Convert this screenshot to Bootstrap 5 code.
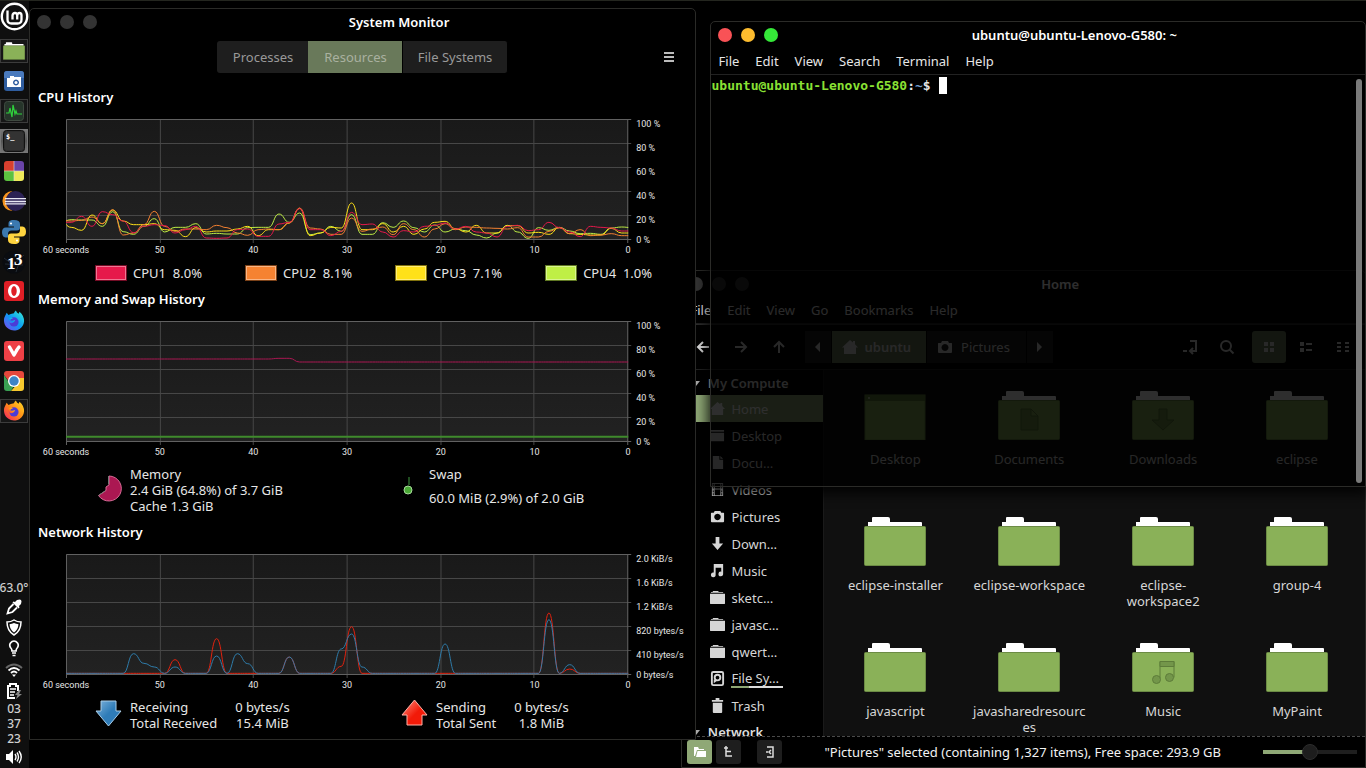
<!DOCTYPE html>
<html lang="en">
<head>
<meta charset="utf-8">
<meta name="viewport" content="width=device-width, initial-scale=1">
<title>Desktop</title>
<link href="https://cdn.jsdelivr.net/npm/bootstrap@5.3.0/dist/css/bootstrap.min.css" rel="stylesheet">
<style>
  :root { --ui: "Noto Sans", "Open Sans", sans-serif; --line: #2b2b28; }
  body { background: #000; color: #e6e6e6; font: 13px/16px var(--ui); height: 100vh; min-height: 768px; overflow: hidden; border-top: 1px solid #24261f; }
  button { font: inherit; color: inherit; background: none; border: 0; padding: 0; }
  a { color: inherit; text-decoration: none; }
  svg { display: block; flex: none; }
  h2 { font-size: 13px; line-height: 20px; font-weight: 600; color: #fff; margin: 0; }

  /* panel */
  .dock { flex: 0 0 29px; background: #0f0f0f; color: #d0d0d0; }
  .dock-menu { height: 32px; margin-bottom: 3px; }
  .dock-app { height: 24px; margin: 3px 0; border: 1px solid transparent; width: 28px; }
  .dock-app.open { border-color: #3c3c3c; background: #161616; }
  .dock-app.focused { background: linear-gradient(#777, #555 50%, #777); border-color: #777; }
  .dock-tray { width: 28px; padding-bottom: 1px; }
  .dock-tray button { height: 21px; }
  .dock-clock { line-height: 15px; font-size: 12px; font-weight: 500; }
  .dock-temp { font-size: 12px; font-weight: 500; white-space: nowrap; }

  /* windows */
  .win { position: absolute; border: 1px solid var(--line); border-radius: 5px 5px 0 0; background: #000; }
  .win-monitor { left: 0; width: 49.9%; top: 7px; z-index: 2; }
  .win-home { left: 48.8%; right: 0; top: 269px; bottom: 0; z-index: 1; }
  .win-term { left: 50.9%; right: 0; top: 20px; height: 466px; z-index: 3; background: rgba(0,0,0,.82); box-shadow: 0 4px 14px 2px rgba(0,0,0,.9); }
  .titlebar { height: 26px; padding-left: 7px; }
  .titlebar strong { color: #fff; font-size: 13px; font-weight: 600; padding-left: 6px; }
  .dots { gap: 9px; }
  .dot { width: 14px; height: 14px; border-radius: 50%; background: #333; }
  .menubar { height: 27px; padding-left: 8px; gap: 16px; border-bottom: 1px solid #222; }

  /* monitor */
  .tabs { height: 32px; }
  .tabs .btn { font-size: 13px; line-height: 16px; padding: 0 15px 0 16px; color: #999; background: #1e1e1e; border: 0; border-right: 1px solid #000; border-radius: 3px; }
  .tabs .btn.active { background: #69795a; color: #a9b1a0; }
  .tool-row { display: grid; grid-template-columns: 1fr auto 1fr; padding: 6px 21px 14px 21px; }
  .history { padding: 0 0 0 8px; }
  .plot { margin: 12px 0 0 28px; }
  .plot-area { height: 121px; }
  .plot-area svg { width: 100%; height: 121px; overflow: visible; }
  .plot-area svg svg { overflow: hidden; }
  .y-axis { width: 67px; margin: -7px 0 -8px; padding-left: 8px; font: 9px Roboto, sans-serif; }
  .y-axis span { height: 24px; line-height: 24px; white-space: nowrap; }
  .y-axis span:last-child { height: 16px; line-height: 16px; }
  .x-axis { margin: 3px 67px 0 28px; font: 9px/14px Roboto, sans-serif; }
  .x-axis span { width: 0; display: flex; justify-content: center; white-space: nowrap; }
  .legend-row { padding: 8px 0 8px 65px; }
  .swatch { width: 32px; height: 16px; border: 1px solid; box-shadow: inset 0 0 0 1px rgba(255,255,255,.4); margin-right: 6px; }
  .mem-info { padding: 7px 0 8px 67px; height: 63px; }
  .mem-info > div { flex: 0 0 50%; }
  .net-info { padding: 7px 0 8px 65px; }
  .net-info > div { flex: 0 0 51%; }
  .rates { margin-left: 18px; }

  /* file manager */
  .files-bar { height: 46px; border-bottom: 1px solid #222; border-top: 1px solid #2c2c2c; color: #ddd; padding: 0 14px 0 14px; }
  .files-bar > button { width: 16px; height: 16px; }
  .nav-arrows { gap: 22px; }
  .pathbar { height: 32px; margin-left: 17px; }
  .pathbar button { background: #1e1e1e; height: 32px; margin-right: 1px; }
  .pathbar .here { padding: 0 15px 0 10px; gap: 6px; font-weight: 600; }
  .pathbar .next { padding: 0 16px 0 10px; gap: 8px; }
  .pathbar .here, .files-bar .picked { background: #6a7a5b; }
  .files-bar .picked { width: 34px; height: 32px; border-radius: 3px; margin: 0 12px 0 17px; }
  .far { margin-right: 21px; }
  .places { flex: 0 0 141px; overflow: hidden; }
  .places a { height: 27px; padding-left: 28px; gap: 6px; color: #d6d6d6; white-space: nowrap; }
  .places a.sel { background: #8fa876; color: #fff; }
  .places h3 { font-size: 13px; line-height: 16px; height: 25px; font-weight: 600; margin: 0; padding-left: 10px; gap: 4px; color: #ddd; white-space: nowrap; }
  .disk-bar { width: 52px; height: 2px; background: #ddd; }
  .disk-bar i { display: block; height: 2px; background: #8fa876; }
  .pane { background: #101010; border-left: 1px solid #1a1a1a; overflow: hidden; padding: 21px 1px 0 4px; }
  .folder { height: 126px; color: #d6d6d6; line-height: 16px; text-align: center; }
  .folder span { display: block; margin: 11px auto 0; max-width: 116px; overflow-wrap: anywhere; }
  .statusbar { height: 31px; border-top: 1px dashed #4a4a4a; color: #f2f2f2; padding-left: 5px; padding-right: 8px; }
  .statusbar button { width: 25px; height: 24px; border-radius: 3px; background: #1e1e1e; }
  .statusbar button.on { background: #8fa876; }
  .zoom-range { appearance: none; -webkit-appearance: none; width: 94px; height: 18px; margin: 0; background: linear-gradient(90deg, #8fa876 46%, #1f1f1f 46%) center/100% 4px no-repeat; }
  .zoom-range::-webkit-slider-thumb { -webkit-appearance: none; width: 16px; height: 16px; border-radius: 50%; background: #1d1d1d; border: 1px solid #2c2c2c; }

  /* terminal */
  .term-text { font: 700 13px/18px "DejaVu Sans Mono", "Liberation Mono", monospace; padding: 2px 0 0 1px; white-space: pre; }
  .term-cursor { display: inline-block; width: 8px; height: 17px; background: #fff; vertical-align: -4px; }
  .term-scroll { width: 6px; margin: 4px 3px 3px 0; border-radius: 3px; background: #7a7a7a; }
</style>
</head>
<body class="d-flex">

<!-- shared icons -->
<svg width="0" height="0" class="position-absolute">
  <defs>
    <linearGradient id="plotbg" x2="0" y2="1"><stop stop-color="#191919"/><stop offset="1" stop-color="#222"/></linearGradient>
    <linearGradient id="fox" x1="1" y1="0" x2="0" y2="1"><stop stop-color="#ffe226"/><stop offset=".5" stop-color="#ff8a16"/><stop offset="1" stop-color="#f5156c"/></linearGradient>
    <linearGradient id="foxdev" x1="1" y1="0" x2="0" y2="1"><stop stop-color="#3df0d0"/><stop offset=".5" stop-color="#0a9cf5"/><stop offset="1" stop-color="#8a3df0"/></linearGradient>
    <linearGradient id="down" x2="1" y2="1"><stop stop-color="#7fb4dd"/><stop offset=".5" stop-color="#2f7cb8"/></linearGradient>
    <linearGradient id="up" x2="1" y2="1"><stop stop-color="#ff8f80"/><stop offset=".55" stop-color="#f21a08"/></linearGradient>
  </defs>
  <symbol id="folder" viewBox="0 0 62 49"><path d="M4 10V5h4V1q0-1 1-1h15q2 0 2 2v3h31q1 0 1 1v4z" fill="#fff"/><rect x=".5" y="9.500" width="61" height="39" rx="1" fill="#8ab158" stroke="#6c8b45"/></symbol>
  <symbol id="dl" viewBox="0 0 16 16"><path d="M6 1h4v7h4l-6 7-6-7h4z"/></symbol>
  <symbol id="home" viewBox="0 0 16 16"><path d="M8 1l3 2.500V2h2v3.300L16 8.500h-2V15H2V8.500H0z"/></symbol>
  <symbol id="cam" viewBox="0 0 16 16"><path fill-rule="evenodd" d="M5 2h6l1 2h2.500q.5 0 .5.500V13q0 1-1 1H2q-1 0-1-1V4.500Q1 4 1.500 4H4zM8 5a3.500 3.500 0 1 0 .01 0z"/></symbol>
  <symbol id="doc" viewBox="0 0 16 16"><path d="M3 1h7v4h4v10H3zM11 1l3 3h-3z"/></symbol>
  <symbol id="desk" viewBox="0 0 16 16"><path d="M1 2h14v2H1zM1 5h14v9H1z"/></symbol>
  <symbol id="film" viewBox="0 0 16 16"><path fill-rule="evenodd" d="M2 1h12v14H2zM3 2h1v2H3zm0 3h1v2H3zm0 4h1v2H3zm0 3h1v2H3zm9-10h1v2h-1zm0 3h1v2h-1zm0 4h1v2h-1zm0 3h1v2h-1zM5 2h6v5H5zm0 6h6v6H5z"/></symbol>
  <symbol id="note" viewBox="0 0 16 16"><path d="M4 1h10v10.500a2.500 2.500 0 1 1-2-2.300V5H6v7.500a2.500 2.500 0 1 1-2-2.300z"/></symbol>
  <symbol id="fold" viewBox="0 0 16 16"><path d="M1 3V2h2V1h6v1h5v1zM0 4h16v10q0 1-1 1H1q-1 0-1-1z"/></symbol>
  <symbol id="disk" viewBox="0 0 16 16"><rect x="2" y="1" width="12" height="14" rx="1.500" fill="none" stroke="currentColor" stroke-width="2"/><circle cx="8" cy="7" r="3" fill="none" stroke="currentColor" stroke-width="2"/><path d="M4 9v4l4-3z"/></symbol>
  <symbol id="bin" viewBox="0 0 16 16"><path d="M2 2h4V0h4v2h4v2H2zM3 5h10v10q0 1-1 1H4q-1 0-1-1z"/></symbol>
  <symbol id="tri" viewBox="0 0 8 8"><path d="M0 2h8L4 7z"/></symbol>
  <symbol id="firefox" viewBox="0 0 24 24"><path d="M12 3.500q0-1.500 2-3 1 2.500 3 3.500l1-2q5 4 5 10.500A11 11 0 1 1 2.500 6L4 3l2 2.500Q8 4 12 3.500z"/><circle cx="12" cy="13" r="5" fill="#4b3bd6"/><path d="M5 10q3-2.500 6-1-3 .5-3 2.500 3 .5 5-.5 0 2.500-4 3.500-3 0-4-4.500z"/></symbol>
</svg>

<nav class="dock d-flex flex-column" aria-label="Panel">
  <button class="dock-menu" aria-label="Menu"><svg width="29" height="32" viewBox="0 0 29 32"><circle cx="14.500" cy="15.500" r="12.700" fill="#111" stroke="#fff" stroke-width="2.400"/><path d="M7.500 9.500v9q0 4 4 4h6q4 0 4-4v-4q0-2.500-2-2.500t-2.300 2.500v4M17.200 14.500q0-2.500-2.200-2.500t-2.500 2.500v4" fill="none" stroke="#fff" stroke-width="2.300"/></svg></button>
  <button class="dock-app open" aria-label="Files"><svg class="mx-auto" width="22" height="18"><use href="#folder"/></svg></button>
  <button class="dock-app" aria-label="Screenshot"><svg class="mx-auto" width="20" height="20" viewBox="0 0 20 20"><rect width="20" height="20" rx="3" fill="#2f5d9f"/><path d="M0 3q0-3 3-3h14q3 0 3 3v4H0z" fill="#4a7abd"/><path fill-rule="evenodd" fill="#fff" d="M3 7h3V5h4v1h7v10H3zm9 1.500a3 3 0 1 0 .01 0z"/><circle cx="12" cy="11.500" r="1.500" fill="#fff"/></svg></button>
  <button class="dock-app open" aria-label="System Monitor"><svg class="mx-auto" width="20" height="20" viewBox="0 0 20 20"><rect x=".5" y=".5" width="19" height="19" rx="3" fill="#26352a" stroke="#3f4a40"/><path d="M2 12h3l1-5 2 9 1-12 2 9 1-3 1 3h5" fill="none" stroke="#2fd23c" stroke-width="1.200"/></svg></button>
  <button class="dock-app focused" aria-label="Terminal"><svg class="mx-auto" width="22" height="22" viewBox="0 0 22 22"><rect x=".5" y=".5" width="21" height="21" rx="3" fill="#2d2d2d" stroke="#111"/><rect x="2" y="2" width="18" height="18" rx="2" fill="#333"/><text x="3" y="9" font-family="DejaVu Sans Mono" font-size="7" font-weight="700" fill="#fff">$_</text></svg></button>
  <button class="dock-app" aria-label="Colors"><svg class="mx-auto" width="20" height="20" viewBox="0 0 20 20"><path d="M0 3q0-3 3-3h7v10H0z" fill="#d8402f"/><path d="M10 0h7q3 0 3 3v7H10z" fill="#6a44a8"/><path d="M0 10h10v10H3q-3 0-3-3z" fill="#5cc23f"/><path d="M10 10h10v7q0 3-3 3h-7z" fill="#eeea5a"/><path d="M10 0v20M0 10h20" stroke="#ddd" stroke-width=".6"/></svg></button>
  <button class="dock-app" aria-label="Eclipse"><svg class="mx-auto" width="24" height="22" viewBox="0 0 25 22"><path d="M11 .5A10.500 10.500 0 1 0 11 21.500 12 12 0 0 1 11 .5z" fill="#f7941e"/><circle cx="14" cy="11" r="10.300" fill="#2c2255"/><path d="M3 8.500h22M3 11.500h22M3 14h22" stroke="#e8e8f4" stroke-width="1.500"/></svg></button>
  <button class="dock-app" aria-label="Python"><svg class="mx-auto" width="24" height="24" viewBox="0 0 24 24"><path d="M12 0C7 0 6.500 2 6.500 4v2.500H12V7.500H4Q0 7.500 0 12.200t3.500 5.300H6V14q0-3.500 3.500-3.500h5.500Q18 10.500 18 7.500V4Q18 0 12 0z" fill="#3b79b0"/><path d="M12 24c5 0 5.500-2 5.500-4v-2.500H12v-1h8q4 0 4-4.700T20.500 6.500H18V10q0 3.500-3.500 3.500H9Q6 13.500 6 16.500V20q0 4 6 4z" fill="#ffd43f"/><circle cx="9" cy="3.500" r="1.100" fill="#fff"/><circle cx="15" cy="20.500" r="1.100" fill="#fff"/></svg></button>
  <button class="dock-app" aria-label="Processing"><svg class="mx-auto" width="24" height="24" viewBox="0 0 24 24"><circle cx="12" cy="12" r="11.500" fill="#0a0c10"/><path d="M2 8l8 6M22 5l-9 8M5 20l8-7M14 22l3-9M3 14l18 1" stroke="#2a333c" stroke-width=".8"/><text x="5" y="19" font-family="Liberation Serif" font-weight="700" font-size="17" fill="#fff">1</text><text x="12" y="15" font-family="Liberation Serif" font-weight="700" font-size="17" fill="#fff">3</text></svg></button>
  <button class="dock-app" aria-label="Opera"><svg class="mx-auto" width="20" height="20" viewBox="0 0 20 20"><rect width="20" height="20" rx="3" fill="#df1f26"/><path fill-rule="evenodd" fill="#fff" d="M10 3a6 7 0 1 0 .01 0zm0 2a2.700 5 0 1 1-.01 0z"/></svg></button>
  <button class="dock-app" aria-label="Firefox Developer"><svg class="mx-auto" width="22" height="22" fill="url(#foxdev)"><use href="#firefox"/></svg></button>
  <button class="dock-app" aria-label="Vivaldi"><svg class="mx-auto" width="20" height="20" viewBox="0 0 20 20"><rect width="20" height="20" rx="3" fill="#ee4046"/><path d="M5.500 6l4.500 8 2-3.500Q13 8.500 15 6" fill="none" stroke="#fff" stroke-width="3.400" stroke-linecap="round" stroke-linejoin="round"/></svg></button>
  <button class="dock-app" aria-label="Chrome"><svg class="mx-auto" width="20" height="20" viewBox="0 0 20 20"><path d="M0 3q0-3 3-3h14q3 0 3 3v4H10L6 12 0 4z" fill="#e5473c"/><path d="M0 4l6 9 4 2-3 5H3q-3 0-3-3z" fill="#3aa053"/><path d="M20 7H11l3 5-7 8h10q3 0 3-3z" fill="#f6c82e"/><circle cx="10" cy="10" r="6" fill="#fff"/><circle cx="10" cy="10" r="4.700" fill="#3d84c6"/></svg></button>
  <button class="dock-app open" aria-label="Firefox"><svg class="mx-auto" width="22" height="22" fill="url(#fox)"><use href="#firefox"/></svg></button>

  <div class="dock-tray mt-auto d-flex flex-column align-items-center">
    <span class="dock-temp">63.0°</span>
    <button aria-label="Color picker"><svg width="16" height="16" viewBox="0 0 16 16" fill="#fff"><path d="M11 1q3-1 4 0t0 4l-2 2 .5 1.500-1 1-6-6 1-1L9 3z"/><path d="M7.500 5L3 9.500 1.500 14.500 6.500 13 11 8.500" fill="none" stroke="#fff" stroke-width="1.800"/></svg></button>
    <button aria-label="Security"><svg width="16" height="17" viewBox="0 0 16 17"><path d="M8 1q3 2 7 2 0 9-7 13Q1 12 1 3q4 0 7-2z" fill="none" stroke="#fff" stroke-width="1.500"/><path d="M8 4q2 1 4.500 1.300Q12 11 8 13.500 4 11 3.500 5.300 6 5 8 4z" fill="#fff"/></svg></button>
    <button aria-label="Hints"><svg width="12" height="17" viewBox="0 0 12 17"><path d="M4 11Q4 9 2.500 7.500 1 5 2.500 3T6 1t3.500 2 0 4.500Q8 9 8 11z" fill="none" stroke="#fff" stroke-width="1.700"/><path d="M4 13h4M4.500 15.500h3" stroke="#fff" stroke-width="1.500"/></svg></button>
    <button aria-label="Network"><svg width="18" height="14" viewBox="0 0 18 14" fill="none" stroke-width="1.800"><path d="M1 5q8-7 16 0" stroke="#666"/><path d="M3.500 7.500q5.500-5 11 0M6 10q3-3 6 0" stroke="#fff"/><path d="M7 11.500h4L9 14z" fill="#fff"/></svg></button>
    <button aria-label="Battery"><svg width="16" height="16" viewBox="0 0 16 16"><path d="M9 15H2V3h2V1h6v2h2v5" fill="none" stroke="#fff" stroke-width="2"/><path d="M4 6h6M4 9h5M4 12h4" stroke="#fff" stroke-width="1.500"/><path d="M13 7l-4 5h2.500L10 16l6-5h-3l2-4z" fill="#888"/></svg></button>
    <div class="dock-clock">03<br>37<br>23</div>
    <button aria-label="Volume"><svg width="16" height="16" viewBox="0 0 16 16"><path d="M0 5h3l4-4v14l-4-4H0z" fill="#fff"/><path d="M9 5q2 3 0 6M11 3.500q3 4.500 0 9M13 2q4.500 6 0 12" fill="none" stroke="#fff" stroke-width="1.400"/></svg></button>
  </div>
</nav>

<main class="flex-fill position-relative overflow-hidden">

  <!-- System Monitor -->
  <section class="win win-monitor">
    <header class="titlebar d-flex align-items-center">
      <div class="dots d-flex"><span class="dot"></span><span class="dot"></span><span class="dot"></span></div>
      <strong class="flex-fill text-center">System Monitor</strong>
    </header>
    <div class="tool-row align-items-center">
      <span></span>
      <div class="btn-group tabs" role="tablist">
        <button class="btn" role="tab">Processes</button>
        <button class="btn active" role="tab" aria-selected="true">Resources</button>
        <button class="btn" role="tab">File Systems</button>
      </div>
      <button class="ms-auto" aria-label="Menu"><svg width="10" height="10"><path d="M0 1h10M0 5h10M0 9h10" stroke="#bbb" stroke-width="2"/></svg></button>
    </div>

    <div class="history">
      <h2>CPU History</h2>
      <div class="plot d-flex"><div class="plot-area flex-fill" data-plot="cpu"></div>
        <div class="y-axis d-flex flex-column"><span>100 %</span><span>80 %</span><span>60 %</span><span>40 %</span><span>20 %</span><span>0 %</span></div></div>
      <div class="x-axis d-flex justify-content-between"><span>60 seconds</span><span>50</span><span>40</span><span>30</span><span>20</span><span>10</span><span>0</span></div>
    </div>
    <div class="legend-row d-flex">
      <div class="col d-flex"><span class="swatch" style="background:#e6194b;border-color:#730c25"></span>CPU1&nbsp; 8.0%</div>
      <div class="col d-flex"><span class="swatch" style="background:#f58231;border-color:#7a4118"></span>CPU2&nbsp; 8.1%</div>
      <div class="col d-flex"><span class="swatch" style="background:#ffe119;border-color:#80710c"></span>CPU3&nbsp; 7.1%</div>
      <div class="col d-flex"><span class="swatch" style="background:#bfef45;border-color:#5f7722"></span>CPU4&nbsp; 1.0%</div>
    </div>

    <div class="history">
      <h2>Memory and Swap History</h2>
      <div class="plot d-flex"><div class="plot-area flex-fill" data-plot="mem"></div>
        <div class="y-axis d-flex flex-column"><span>100 %</span><span>80 %</span><span>60 %</span><span>40 %</span><span>20 %</span><span>0 %</span></div></div>
      <div class="x-axis d-flex justify-content-between"><span>60 seconds</span><span>50</span><span>40</span><span>30</span><span>20</span><span>10</span><span>0</span></div>
    </div>
    <div class="mem-info d-flex">
      <div class="d-flex">
        <svg class="mt-2 me-2" width="25" height="30" viewBox="0 0 25 30"><path d="M12 2A12.500 12.500 0 1 1 1.500 21.500L9 16.500V13l3-2z" fill="#ab1852" stroke="#d66a95"/><path d="M11.500 2v8M1.500 21.500L8 17" stroke="#777"/></svg>
        <div>Memory<br>2.4 GiB (64.8%) of 3.7 GiB<br>Cache 1.3 GiB</div>
      </div>
      <div class="d-flex">
        <svg class="mt-2 me-2" width="25" height="30" viewBox="0 0 25 30"><path d="M13 3v8" stroke="#3f9a3f"/><circle cx="12" cy="16" r="4" fill="#49a835" stroke="#a6d99b"/></svg>
        <div>Swap<div class="mt-2">60.0 MiB (2.9%) of 2.0 GiB</div></div>
      </div>
    </div>

    <div class="history">
      <h2>Network History</h2>
      <div class="plot d-flex"><div class="plot-area flex-fill" data-plot="net"></div>
        <div class="y-axis d-flex flex-column"><span>2.0 KiB/s</span><span>1.6 KiB/s</span><span>1.2 KiB/s</span><span>820 bytes/s</span><span>410 bytes/s</span><span>0 bytes/s</span></div></div>
      <div class="x-axis d-flex justify-content-between"><span>60 seconds</span><span>50</span><span>40</span><span>30</span><span>20</span><span>10</span><span>0</span></div>
    </div>
    <div class="net-info d-flex">
      <div class="d-flex">
        <svg class="me-2" width="27" height="28" viewBox="0 0 27 28"><path d="M6 2h15v10h5L13.500 27 1 12h5z" fill="url(#down)" stroke="#a9cde8"/></svg>
        <div>Receiving<br>Total Received</div>
        <div class="text-center rates">0 bytes/s<br>15.4 MiB</div>
      </div>
      <div class="d-flex">
        <svg class="me-2" width="27" height="28" viewBox="0 0 27 28"><path d="M6 26h15V16h5L13.500 1 1 16h5z" fill="url(#up)" stroke="#ffb0a6"/></svg>
        <div>Sending<br>Total Sent</div>
        <div class="text-center rates">0 bytes/s<br>1.8 MiB</div>
      </div>
    </div>
  </section>

  <!-- File manager -->
  <section class="win win-home d-flex flex-column">
    <header class="titlebar d-flex align-items-center flex-shrink-0">
      <div class="dots d-flex"><span class="dot"></span><span class="dot"></span><span class="dot"></span></div>
      <strong class="flex-fill text-center">Home</strong>
    </header>
    <div class="menubar d-flex align-items-center flex-shrink-0"><button>File</button><button>Edit</button><button>View</button><button>Go</button><button>Bookmarks</button><button>Help</button></div>
    <div class="files-bar d-flex align-items-center flex-shrink-0">
      <div class="nav-arrows d-flex">
        <button aria-label="Back"><svg width="16" height="14" fill="none" stroke="currentColor" stroke-width="2"><path d="M13 7H2M7 2L2 7l5 5"/></svg></button>
        <button aria-label="Forward"><svg width="16" height="14" fill="none" stroke="currentColor" stroke-width="2"><path d="M1 7h11M7 2l5 5-5 5"/></svg></button>
        <button aria-label="Up"><svg width="16" height="14" fill="none" stroke="currentColor" stroke-width="2"><path d="M7 13V2M2 7l5-5 5 5"/></svg></button>
      </div>
      <div class="pathbar d-flex">
        <button class="px-2" aria-label="Previous"><svg width="10" height="12" fill="currentColor"><path d="M7 1v10L2 6z"/></svg></button>
        <button class="here d-flex align-items-center"><svg width="16" height="16" fill="currentColor"><use href="#home"/></svg>ubuntu</button>
        <button class="next d-flex align-items-center"><svg width="16" height="16" fill="currentColor"><use href="#cam"/></svg>Pictures</button>
        <button class="px-2" aria-label="Next"><svg width="10" height="12" fill="currentColor"><path d="M2 1v10l5-5z"/></svg></button>
      </div>
      <button class="ms-auto far" aria-label="Location"><svg width="16" height="16" fill="none" stroke="currentColor" stroke-width="2"><path d="M8 2h6v10H8"/><path d="M11 9l-3 3 3 3M1 12h4"/></svg></button>
      <button aria-label="Search"><svg width="16" height="16" fill="none" stroke="currentColor" stroke-width="2"><circle cx="7" cy="7" r="5"/><path d="M10.500 10.500l4 4"/></svg></button>
      <button class="picked" aria-label="Icon view"><svg class="m-auto" width="12" height="12" fill="currentColor"><path d="M1 1h4v4H1zM7 1h4v4H7zM1 7h4v4H1zM7 7h4v4H7z"/></svg></button>
      <button class="far" aria-label="List view"><svg class="m-auto" width="14" height="12" fill="currentColor"><path d="M1 1h4v4H1zM7 2h6v2H7zM1 7h4v4H1zM7 8h6v2H7z"/></svg></button>
      <button aria-label="Compact view"><svg class="m-auto" width="14" height="12" fill="currentColor"><path d="M1 1h4v2H1zM9 1h4v2H9zM1 5h4v2H1zM9 5h4v2H9zM1 9h4v2H1zM9 9h4v2H9z"/></svg></button>
    </div>
    <div class="d-flex flex-fill" style="min-height:0">
      <nav class="places">
        <h3 class="d-flex align-items-center"><svg width="8" height="8" fill="#aaa"><use href="#tri"/></svg>&nbsp;My Compute</h3>
        <a href="#" class="d-flex align-items-center sel"><svg width="15" height="15" fill="currentColor"><use href="#home"/></svg>Home</a>
        <a href="#" class="d-flex align-items-center"><svg width="15" height="15" fill="currentColor"><use href="#desk"/></svg>Desktop</a>
        <a href="#" class="d-flex align-items-center"><svg width="15" height="15" fill="currentColor"><use href="#doc"/></svg>Docu…</a>
        <a href="#" class="d-flex align-items-center"><svg width="15" height="15" fill="currentColor"><use href="#film"/></svg>Videos</a>
        <a href="#" class="d-flex align-items-center"><svg width="15" height="15" fill="currentColor"><use href="#cam"/></svg>Pictures</a>
        <a href="#" class="d-flex align-items-center"><svg width="15" height="15" fill="currentColor"><use href="#dl"/></svg>Down…</a>
        <a href="#" class="d-flex align-items-center"><svg width="15" height="15" fill="currentColor"><use href="#note"/></svg>Music</a>
        <a href="#" class="d-flex align-items-center"><svg width="15" height="15" fill="currentColor"><use href="#fold"/></svg>sketc…</a>
        <a href="#" class="d-flex align-items-center"><svg width="15" height="15" fill="currentColor"><use href="#fold"/></svg>javasc…</a>
        <a href="#" class="d-flex align-items-center"><svg width="15" height="15" fill="currentColor"><use href="#fold"/></svg>qwert…</a>
        <a href="#" class="d-flex align-items-center"><svg width="15" height="15" fill="currentColor"><use href="#disk"/></svg><span>File Sy…<span class="disk-bar d-block"><i style="width:34%"></i></span></span></a>
        <a href="#" class="d-flex align-items-center"><svg width="15" height="15" fill="currentColor"><use href="#bin"/></svg>Trash</a>
        <h3 class="d-flex align-items-center"><svg width="8" height="8" fill="#aaa"><use href="#tri"/></svg>&nbsp;Network</h3>
      </nav>
      <div class="pane flex-fill">
        <div class="row row-cols-4 g-0">
          <div class="col folder"><svg class="mx-auto" width="62" height="49" viewBox="0 0 62 49"><rect x="1" y="4" width="60" height="45" fill="#8ab158" stroke="#6c8b45"/><path d="M1 4h60v6H1z" fill="#60803a"/><path d="M4 7h2" stroke="#fff"/></svg><span>Desktop</span></div>
          <div class="col folder"><svg class="mx-auto" width="62" height="49" viewBox="0 0 62 49"><use href="#folder"/><path d="M23 18h10l7 7v14H23zM33 18v7h7" fill="#73964a" stroke="#5d7c39"/></svg><span>Documents</span></div>
          <div class="col folder"><svg class="mx-auto" width="62" height="49" viewBox="0 0 62 49"><use href="#folder"/><path d="M27 18h8v11h7L31 39 20 29h7z" fill="#73964a" stroke="#5d7c39"/></svg><span>Downloads</span></div>
          <div class="col folder"><svg class="mx-auto" width="62" height="49"><use href="#folder"/></svg><span>eclipse</span></div>
          <div class="col folder"><svg class="mx-auto" width="62" height="49"><use href="#folder"/></svg><span>eclipse-installer</span></div>
          <div class="col folder"><svg class="mx-auto" width="62" height="49"><use href="#folder"/></svg><span>eclipse-workspace</span></div>
          <div class="col folder"><svg class="mx-auto" width="62" height="49"><use href="#folder"/></svg><span>eclipse-workspace2</span></div>
          <div class="col folder"><svg class="mx-auto" width="62" height="49"><use href="#folder"/></svg><span>group-4</span></div>
          <div class="col folder"><svg class="mx-auto" width="62" height="49"><use href="#folder"/></svg><span>javascript</span></div>
          <div class="col folder"><svg class="mx-auto" width="62" height="49"><use href="#folder"/></svg><span>javasharedresources</span></div>
          <div class="col folder"><svg class="mx-auto" width="62" height="49" viewBox="0 0 62 49"><use href="#folder"/><path d="M28 35V18.500M42 18.500v16" fill="none" stroke="#5d7c39"/><path d="M28 18.500h14v5H28z" fill="#73964a" stroke="#5d7c39"/><circle cx="24.500" cy="36.500" r="4" fill="#73964a" stroke="#5d7c39"/><circle cx="37.500" cy="34.500" r="4" fill="#73964a" stroke="#5d7c39"/></svg><span>Music</span></div>
          <div class="col folder"><svg class="mx-auto" width="62" height="49"><use href="#folder"/></svg><span>MyPaint</span></div>
        </div>
      </div>
    </div>
    <footer class="statusbar d-flex align-items-center flex-shrink-0">
      <button class="on" aria-label="Places"><svg class="m-auto" width="12" height="11" fill="#fff"><path d="M0 0h4l1 2h5v1H3L1 9H0zM3.500 4H12v6H2z"/></svg></button>
      <button class="ms-1" aria-label="Tree"><svg class="m-auto" width="12" height="12" fill="none" stroke="#ddd" stroke-width="1.500"><path d="M3 0v10h6M3 5.500h5M1 2h4"/></svg></button>
      <button class="ms-3" aria-label="Hide sidebar"><svg class="m-auto" width="10" height="12" fill="none" stroke="#ddd" stroke-width="1.500"><path d="M2 1h6v10H2M6 4L4 6l2 2M1 6h2"/></svg></button>
      <span class="flex-fill text-center text-nowrap">"Pictures" selected (containing 1,327 items), Free space: 293.9 GB</span>
      <input type="range" class="zoom-range" min="0" max="100" value="50" aria-label="Zoom">
    </footer>
  </section>

  <!-- Terminal -->
  <section class="win win-term d-flex flex-column">
    <header class="titlebar d-flex align-items-center">
      <div class="dots d-flex"><span class="dot" style="background:#f95256"></span><span class="dot" style="background:#fdbc2e"></span><span class="dot" style="background:#35e838"></span></div>
      <strong class="flex-fill text-center">ubuntu@ubuntu-Lenovo-G580: ~</strong>
    </header>
    <div class="menubar d-flex align-items-center"><button>File</button><button>Edit</button><button>View</button><button>Search</button><button>Terminal</button><button>Help</button></div>
    <div class="d-flex flex-fill">
      <div class="term-text flex-fill"><span style="color:#8ae234">ubuntu@ubuntu-Lenovo-G580</span>:<span style="color:#729fcf">~</span>$ <span class="term-cursor"></span></div>
      <div class="term-scroll"></div>
    </div>
  </section>
</main>

<script>
  // Sample heights, oldest first, in 1/360 of the plot height.
  const fill = (base, peaks) => Array.from({length: 56}, (_, i) => peaks[i - 1] ?? base);
  const series = {
    cpu: [
      ['#bfef45', [50,58,57,57,38,82,22,14,38,61,21,35,35,46,15,17,15,15,34,35,35,75,50,78,13,18,38,23,73,14,14,49,35,54,34,21,42,21,30,25,12,3,18,41,21,2,34,26,35,24,16,17,14,33,36,34]],
      ['#ffe119', [53,35,26,72,46,87,54,43,43,46,28,26,7,34,21,24,24,30,38,10,28,28,48,92,10,18,35,33,108,28,28,46,21,38,14,30,50,53,31,21,41,18,18,40,40,18,20,14,34,16,14,12,12,32,18,18]],
      ['#f58231', [56,54,56,66,46,88,12,18,43,83,38,23,30,30,28,41,34,18,11,28,30,28,48,93,33,30,14,14,63,23,30,36,13,46,28,6,30,46,28,36,35,33,32,30,34,6,6,23,34,16,28,10,12,16,10,10]],
      ['#e6194b', [50,50,68,38,82,73,54,19,38,43,40,18,28,38,3,2,3,28,30,8,8,45,50,91,28,28,10,23,80,43,45,21,6,25,21,38,41,48,30,38,21,18,6,38,41,25,28,50,34,21,7,38,35,33,24,24]]
    ],
    mem: [
      ['#3f8a2c', fill(13, {}), 2],
      ['#ab1852', Array.from({length: 56}, (_, i) => i < 23 ? (i > 20 ? 248 : 246) : 237)]
    ],
    net: [
      ['#e2220f', fill(2, {10:43, 14:106, 21:51, 26:23, 27:142, 46:183, 48:15})],
      ['#2f7cab', fill(2, {6:61, 7:32, 8:21, 10:21, 14:54, 16:61, 17:31, 21:51, 26:75, 27:120, 28:21, 36:90, 46:163, 48:28})]
    ]
  };
  const W = 562, H = 120, STEP = 10.4;
  const curve = v => v.map((s, i) => {
    const x = (i - .5) * STEP, y = H - s / 3;
    if (!i) return `M${x} ${y}`;
    const m = x - STEP / 2;
    return `C${m} ${H - v[i - 1] / 3} ${m} ${y} ${x} ${y}`;
  }).join('');
  for (const el of document.querySelectorAll('[data-plot]')) {
    let g = '';
    for (let i = 1; i < 5; i++) g += `<path d="M0 ${i * 24 + .5}H566"/>`;
    for (let i = 1; i < 6; i++) { const x = Math.round(i * W / 6) + .5; g += `<path d="M${x} 0V124"/>`; }
    const lines = series[el.dataset.plot].map(([c, v, w]) => `<path d="${curve(v)}" stroke="${c}" stroke-width="${w || 1}"/>`).join('');
    el.innerHTML = `<svg viewBox="0 0 563 121" preserveAspectRatio="none" fill="none">
      <rect width="563" height="121" fill="url(#plotbg)"/>
      <g stroke="#474747">${g}</g>
      <path d="M.5 124V.5H566M562.5 0V124M0 120.500H566" stroke="#616161"/>
      <svg width="562" height="121">${lines}</svg></svg>`;
  }
</script>
<script src="https://cdn.jsdelivr.net/npm/bootstrap@5.3.0/dist/js/bootstrap.bundle.min.js"></script>
</body>
</html>
